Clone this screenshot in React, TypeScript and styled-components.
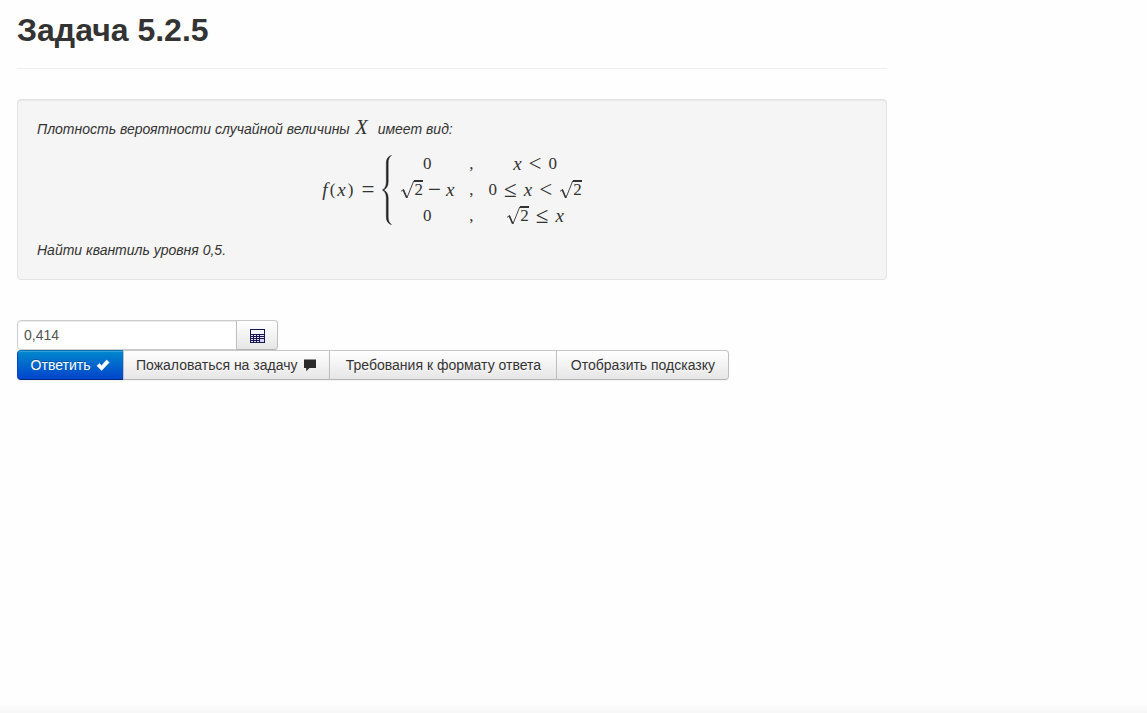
import React, { useState } from "react";
import styled, { createGlobalStyle } from "styled-components";

const GlobalStyle = createGlobalStyle`
  * { box-sizing: border-box; }
  body {
    margin: 0;
    background: #fefefe;
    color: #333;
    font: 14px/20px "Liberation Sans", Arial, sans-serif;
  }
`;

const Page = styled.div`
  display: flex;
  flex-direction: column;
  min-height: 100vh;
`;

const Content = styled.main`
  flex: 1;
  width: 100%;
  max-width: 904px;
  padding: 10px 17px 20px;
`;

const BottomShade = styled.div`
  height: 9px;
  background: linear-gradient(#fefefe, #f6f6f6);
`;

const Title = styled.h1`
  margin: 0 0 30px;
  padding-bottom: 18px;
  border-bottom: 1px solid #eee;
  font-size: 32px;
  line-height: 40px;
  font-weight: bold;
`;

const Well = styled.section`
  margin-bottom: 40px;
  padding: 19px;
  border: 1px solid #e3e3e3;
  border-radius: 4px;
  background: #f5f5f5;
  box-shadow: inset 0 1px 1px rgba(0, 0, 0, 0.05);
  font-style: italic;
`;

const Text = styled.p`
  margin: 0;
`;

const MathText = styled.span`
  font-family: "Liberation Serif", "Times New Roman", serif;
  font-size: 17px;
  line-height: 20px;
  font-style: normal;
`;

const Variable = styled.i`
  font-size: 19px;
`;

const InlineMath = styled(MathText)`
  margin: 0 6px 0 2px;
  font-size: 20px;
  line-height: 1px;
  font-style: italic;
`;

const Formula = styled(MathText)`
  display: flex;
  justify-content: center;
  align-items: center;
  margin: 16px 0 15px;
  gap: 8px;
`;

const FunctionName = styled.span`
  display: flex;
  align-items: center;
  gap: 2px;
`;

const Cases = styled.span`
  display: grid;
  grid-template-columns: auto auto auto;
  grid-auto-rows: 26px;
  justify-items: center;
  align-items: center;
  column-gap: 15px;
  height: 78px;
  margin: -4px 0;
`;

const Expression = styled.span<{ $tight?: boolean }>`
  display: flex;
  align-items: center;
  gap: ${(p) => (p.$tight ? 5 : 7)}px;
`;

const Operator = styled.span`
  font-size: 23px;
`;

const Root = styled.span`
  display: flex;
`;

const Radicand = styled.span`
  border-top: 2px solid #333;
  line-height: 16px;
`;

const RadicalMark = styled.svg`
  width: 14px;
  height: 20px;
`;

const BraceMark = styled.svg`
  width: 10px;
  height: 70px;
`;

const InputGroup = styled.div`
  display: flex;
`;

const AnswerInput = styled.input`
  width: 220px;
  height: 30px;
  padding: 4px 6px;
  border: 1px solid #ccc;
  border-radius: 4px 0 0 4px;
  background: #fff;
  box-shadow: inset 0 1px 1px rgba(0, 0, 0, 0.075);
  color: #555;
  font: inherit;
  outline: none;
`;

const ButtonGroup = styled.div`
  display: flex;
  flex-wrap: wrap;
`;

const Button = styled.button<{ $primary?: boolean; $minWidth?: number }>`
  display: flex;
  align-items: center;
  justify-content: center;
  gap: 6px;
  height: 30px;
  min-width: ${(p) => p.$minWidth ?? 42}px;
  margin: 0 0 0 -1px;
  padding: 4px 12px;
  border: 1px solid;
  border-color: ${(p) =>
    p.$primary ? "#0074b8 #04c #002a80" : "#c8c8c8 #c0c0c0 #b3b3b3"};
  background: ${(p) =>
    p.$primary
      ? "linear-gradient(#08c, #04c)"
      : "linear-gradient(#fff, #e6e6e6)"};
  box-shadow: inset 0 1px 0 rgba(255, 255, 255, 0.2),
    0 1px 2px rgba(0, 0, 0, 0.05);
  color: ${(p) => (p.$primary ? "#fff" : "#333")};
  text-shadow: ${(p) =>
    p.$primary
      ? "0 -1px 0 rgba(0, 0, 0, 0.25)"
      : "0 1px 1px rgba(255, 255, 255, 0.75)"};
  font: inherit;
  white-space: nowrap;
  cursor: pointer;

  ${ButtonGroup} &:first-child {
    margin-left: 0;
    border-radius: 4px 0 0 4px;
  }
  &:last-child {
    border-radius: 0 4px 4px 0;
  }
`;

const Icon = styled.svg`
  width: 14px;
  height: 14px;
  flex: none;
`;

const CalculatorMark = styled.svg`
  width: 16px;
  height: 16px;
`;

function SquareRoot({ children }: { children: React.ReactNode }) {
  return (
    <Root>
      <RadicalMark viewBox="0 0 14 20" aria-hidden="true">
        <path
          d="M1 11.4 L3.5 9.5 L6.9 18 L13.8 0.8"
          fill="none"
          stroke="#333"
          strokeWidth="0.9"
        />
        <path d="M3.2 9.8 L6.6 17.5" stroke="#333" strokeWidth="1.5" />
      </RadicalMark>
      <Radicand>{children}</Radicand>
    </Root>
  );
}

function Brace() {
  return (
    <BraceMark viewBox="0 0 10 70" aria-hidden="true">
      <path
        d="M9.6 0.3 C6.5 1.2 4.3 3.6 4.3 8 V27 C4.3 31.5 2.5 33.8 0.3 35 C2.5 36.2 4.3 38.5 4.3 43 V62 C4.3 66.4 6.5 68.8 9.6 69.7 C7.4 68 6.2 66 6.2 62 V43 C6.2 39 4.5 36.4 1.8 35 C4.5 33.6 6.2 31 6.2 27 V8 C6.2 4 7.4 2 9.6 0.3Z"
        fill="#222"
        stroke="#222"
        strokeWidth="0.4"
      />
    </BraceMark>
  );
}

function CalculatorIcon() {
  return (
    <CalculatorMark viewBox="-1 -2 16 16" shapeRendering="crispEdges" aria-hidden="true">
      <rect width="15" height="14" fill="#17154f" />
      <rect x="1" y="1" width="13" height="4" fill="#f4f4ff" />
      {[6, 8, 10, 12].map((y) =>
        [1, 4, 7, 10].map((x) => (
          <rect
            key={`${x}-${y}`}
            x={x}
            y={y}
            width={x === 10 ? 4 : 2}
            height="1"
            fill="#e4e4f6"
          />
        ))
      )}
      <rect x="10" y="10" width="4" height="3" fill="#d5d5ee" />
    </CalculatorMark>
  );
}

export default function App() {
  const [answer, setAnswer] = useState("0,414");

  return (
    <>
      <GlobalStyle />
      <Page>
        <Content>
          <Title>Задача 5.2.5</Title>
          <Well>
            <Text>
              Плотность вероятности случайной величины{" "}
              <InlineMath>X</InlineMath> имеет вид:
            </Text>
            <Formula>
              <FunctionName>
                <Variable>f</Variable>
                <span>(</span>
                <Variable>x</Variable>
                <span>)</span>
              </FunctionName>
              <Operator>=</Operator>
              <Brace />
              <Cases>
                <span>0</span>
                <span>,</span>
                <Expression>
                  <Variable>x</Variable>
                  <Operator>&lt;</Operator>
                  <span>0</span>
                </Expression>

                <Expression $tight>
                  <SquareRoot>2</SquareRoot>
                  <Operator>−</Operator>
                  <Variable>x</Variable>
                </Expression>
                <span>,</span>
                <Expression>
                  <span>0</span>
                  <Operator>≤</Operator>
                  <Variable>x</Variable>
                  <Operator>&lt;</Operator>
                  <SquareRoot>2</SquareRoot>
                </Expression>

                <span>0</span>
                <span>,</span>
                <Expression>
                  <SquareRoot>2</SquareRoot>
                  <Operator>≤</Operator>
                  <Variable>x</Variable>
                </Expression>
              </Cases>
            </Formula>
            <Text>Найти квантиль уровня 0,5.</Text>
          </Well>
          <form onSubmit={(e) => e.preventDefault()}>
            <InputGroup>
              <AnswerInput
                type="text"
                aria-label="Ответ"
                value={answer}
                onChange={(e) => setAnswer(e.target.value)}
              />
              <Button type="button" aria-label="Калькулятор">
                <CalculatorIcon />
              </Button>
            </InputGroup>
            <ButtonGroup>
              <Button type="submit" $primary $minWidth={107}>
                Ответить
                <Icon viewBox="0 0 14 14" aria-hidden="true">
                  <path
                    d="M1 7.8 L3.3 5.5 L5.5 7.7 L10.7 2 L13.2 4.4 L5.6 12.4Z"
                    fill="#fff"
                    stroke="#fff"
                    strokeWidth="0.6"
                    strokeLinejoin="round"
                  />
                </Icon>
              </Button>
              <Button type="button" $minWidth={207}>
                Пожаловаться на задачу
                <Icon viewBox="0 0 14 14" aria-hidden="true">
                  <path
                    d="M1 1.5 H13 V10 H6.5 L3.2 13.2 V10 H1Z"
                    fill="#2a2a2a"
                  />
                </Icon>
              </Button>
              <Button type="button" $minWidth={228}>
                Требования к формату ответа
              </Button>
              <Button type="button" $minWidth={173}>
                Отобразить подсказку
              </Button>
            </ButtonGroup>
          </form>
        </Content>
        <BottomShade />
      </Page>
    </>
  );
}
